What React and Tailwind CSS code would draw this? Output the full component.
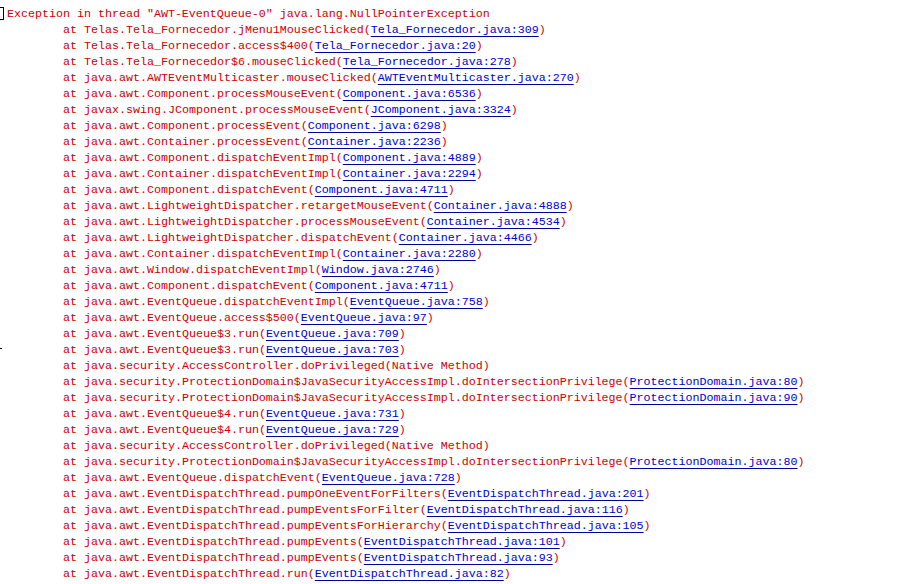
import React from "react";

const frames = [
  ["Telas.Tela_Fornecedor.jMenu1MouseClicked", "Tela_Fornecedor.java:309"],
  ["Telas.Tela_Fornecedor.access$400", "Tela_Fornecedor.java:20"],
  ["Telas.Tela_Fornecedor$6.mouseClicked", "Tela_Fornecedor.java:278"],
  ["java.awt.AWTEventMulticaster.mouseClicked", "AWTEventMulticaster.java:270"],
  ["java.awt.Component.processMouseEvent", "Component.java:6536"],
  ["javax.swing.JComponent.processMouseEvent", "JComponent.java:3324"],
  ["java.awt.Component.processEvent", "Component.java:6298"],
  ["java.awt.Container.processEvent", "Container.java:2236"],
  ["java.awt.Component.dispatchEventImpl", "Component.java:4889"],
  ["java.awt.Container.dispatchEventImpl", "Container.java:2294"],
  ["java.awt.Component.dispatchEvent", "Component.java:4711"],
  ["java.awt.LightweightDispatcher.retargetMouseEvent", "Container.java:4888"],
  ["java.awt.LightweightDispatcher.processMouseEvent", "Container.java:4534"],
  ["java.awt.LightweightDispatcher.dispatchEvent", "Container.java:4466"],
  ["java.awt.Container.dispatchEventImpl", "Container.java:2280"],
  ["java.awt.Window.dispatchEventImpl", "Window.java:2746"],
  ["java.awt.Component.dispatchEvent", "Component.java:4711"],
  ["java.awt.EventQueue.dispatchEventImpl", "EventQueue.java:758"],
  ["java.awt.EventQueue.access$500", "EventQueue.java:97"],
  ["java.awt.EventQueue$3.run", "EventQueue.java:709"],
  ["java.awt.EventQueue$3.run", "EventQueue.java:703"],
  ["java.security.AccessController.doPrivileged", null],
  ["java.security.ProtectionDomain$JavaSecurityAccessImpl.doIntersectionPrivilege", "ProtectionDomain.java:80"],
  ["java.security.ProtectionDomain$JavaSecurityAccessImpl.doIntersectionPrivilege", "ProtectionDomain.java:90"],
  ["java.awt.EventQueue$4.run", "EventQueue.java:731"],
  ["java.awt.EventQueue$4.run", "EventQueue.java:729"],
  ["java.security.AccessController.doPrivileged", null],
  ["java.security.ProtectionDomain$JavaSecurityAccessImpl.doIntersectionPrivilege", "ProtectionDomain.java:80"],
  ["java.awt.EventQueue.dispatchEvent", "EventQueue.java:728"],
  ["java.awt.EventDispatchThread.pumpOneEventForFilters", "EventDispatchThread.java:201"],
  ["java.awt.EventDispatchThread.pumpEventsForFilter", "EventDispatchThread.java:116"],
  ["java.awt.EventDispatchThread.pumpEventsForHierarchy", "EventDispatchThread.java:105"],
  ["java.awt.EventDispatchThread.pumpEvents", "EventDispatchThread.java:101"],
  ["java.awt.EventDispatchThread.pumpEvents", "EventDispatchThread.java:93"],
  ["java.awt.EventDispatchThread.run", "EventDispatchThread.java:82"],
];

const App = () => {
  return (
    <div
      className="w-[900px] h-[584px] bg-white overflow-hidden pt-[6px] text-[11.67px] leading-[16px] text-[#cc0000] whitespace-pre relative"
      style={{ fontFamily: '"Liberation Mono", "Courier New", monospace' }}
    >
      {/* caret box at the start of the output */}
      <div className="absolute left-0 top-[7px] w-[4px] h-[13px] border border-l-0 border-black" />
      <div className="absolute left-0 top-[348px] w-[2px] h-[1px] bg-black" />

      <div className="h-[16px] pl-[7px]">
        Exception in thread "AWT-EventQueue-0" java.lang.NullPointerException
      </div>
      {frames.map(([method, link], idx) => (
        <div key={idx} className="h-[16px] pl-[63px]">
          at {method}(
          {link ? (
            <span className="text-[#0000cc] underline decoration-[#000099] underline-offset-[3px]">
              {link}
            </span>
          ) : (
            "Native Method"
          )}
          )
        </div>
      ))}
    </div>
  );
};

export default App;
